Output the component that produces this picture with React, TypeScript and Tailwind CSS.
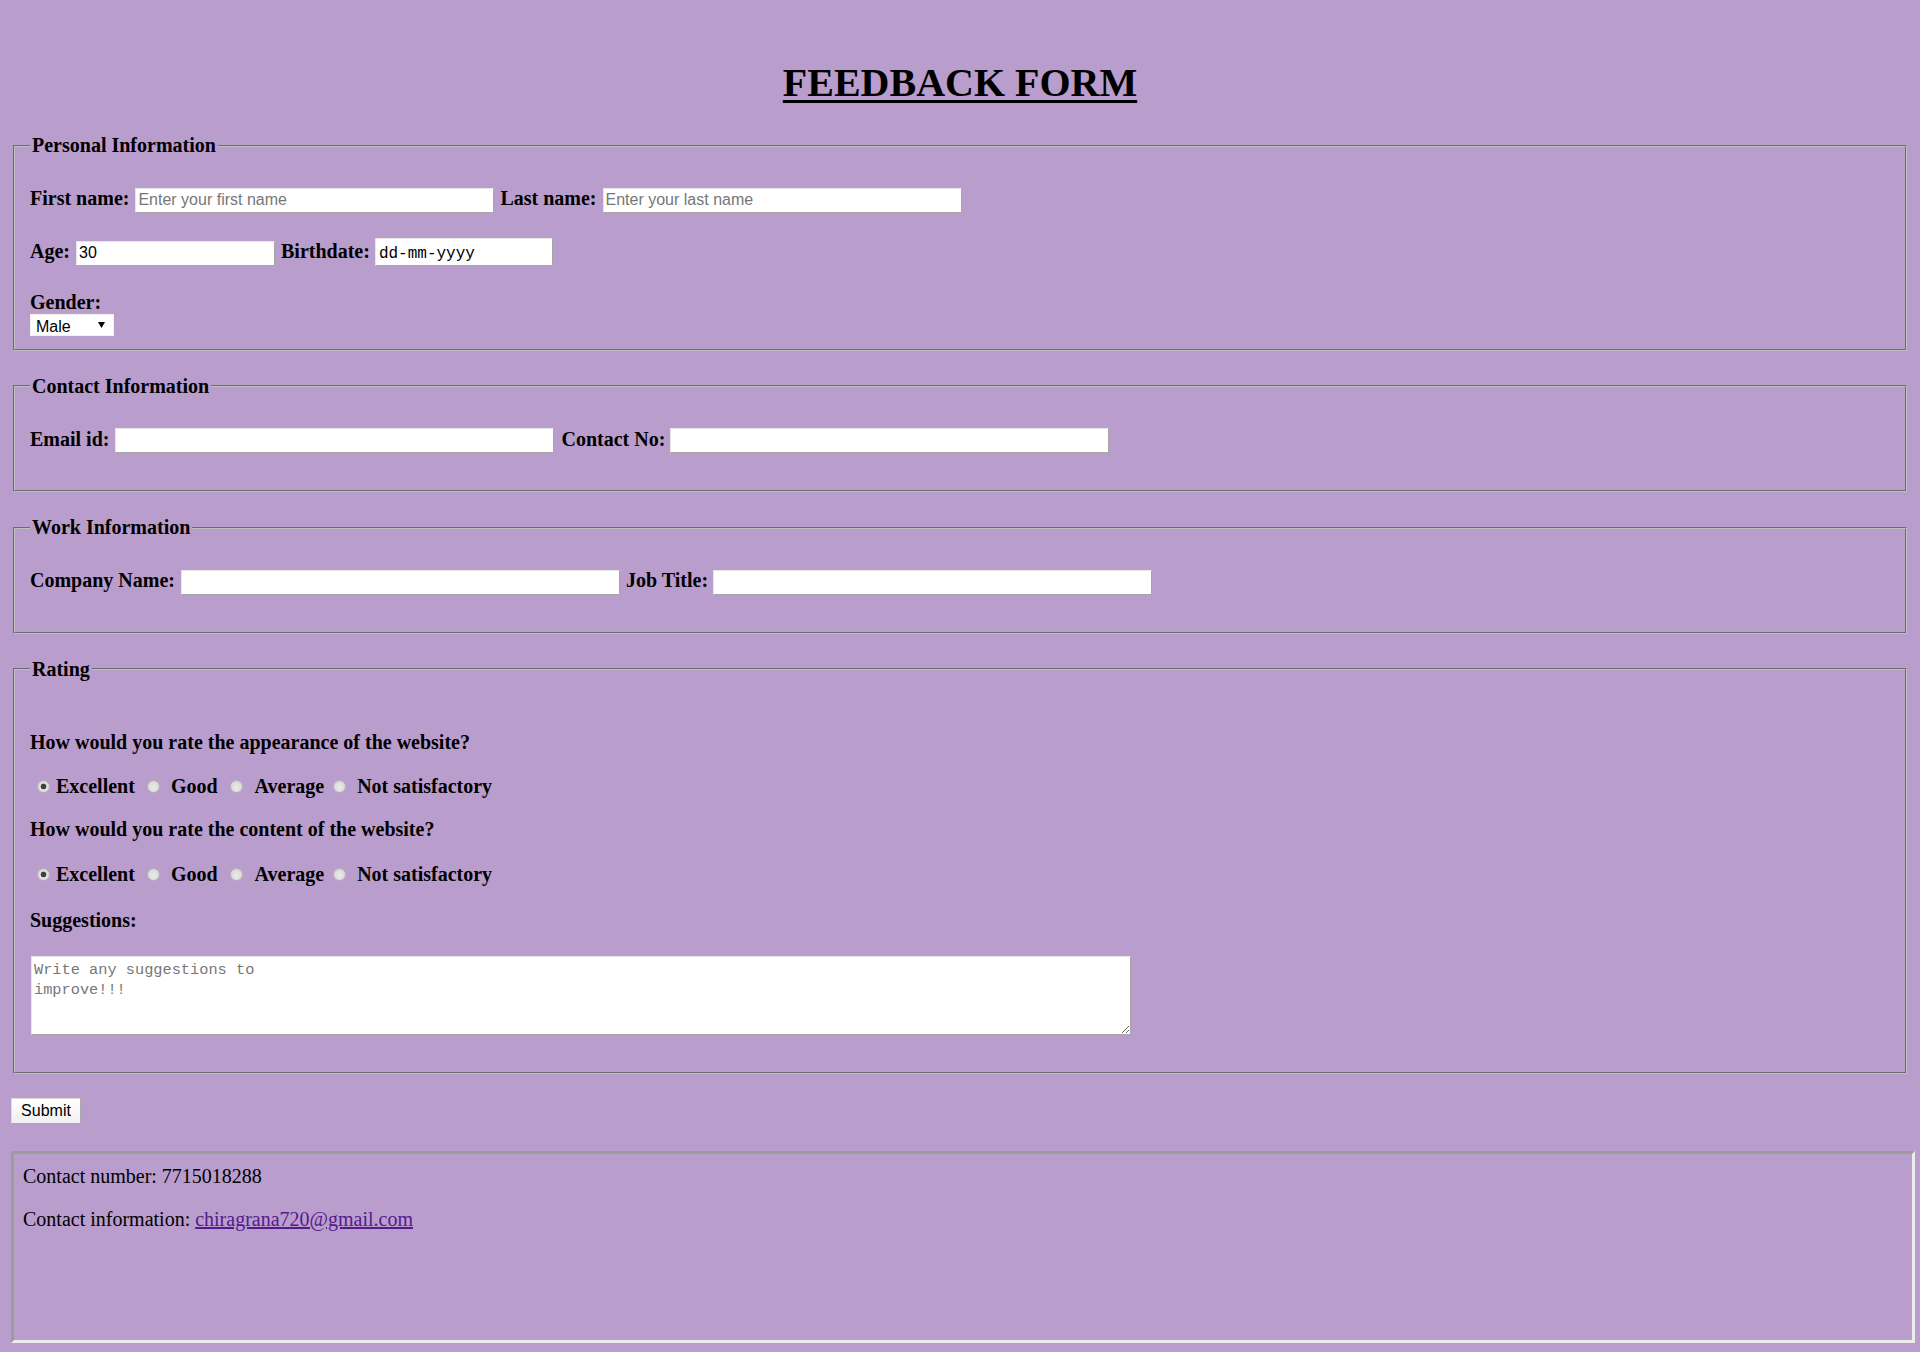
import React from "react";

const field =
  "h-[25px] border border-t-[#e6e6e6] border-l-[#e6e6e6] border-r-[#a6a6a6] border-b-[#a6a6a6] bg-white px-[2px] font-['Liberation_Sans',Arial,sans-serif] text-[16px] font-normal text-black placeholder:text-[#777777] outline-none";

const radio =
  "h-[13px] w-[13px] shrink-0 appearance-none rounded-full border border-[#b5b5b5] bg-[image:radial-gradient(circle_at_50%_60%,#ebebeb_0,#d8d8d8_70%,#c9c9c9_100%)] checked:bg-[image:radial-gradient(circle,#3f3f3f_0,#3f3f3f_2.5px,transparent_3.2px),radial-gradient(circle_at_50%_60%,#ebebeb_0,#d8d8d8_70%,#c9c9c9_100%)]";

type RatingRowProps = {
  name: string;
  className: string;
};

function RatingRow({ name, className }: RatingRowProps) {
  return (
    <div className={`flex h-[23px] items-center ${className}`}>
      <input type="radio" name={name} defaultChecked className={`${radio} ml-[7px]`} />
      <span className="ml-[6px]">Excellent</span>
      <input type="radio" name={name} className={`${radio} ml-[12px]`} />
      <span className="ml-[11px]">Good</span>
      <input type="radio" name={name} className={`${radio} ml-[12px]`} />
      <span className="ml-[12px]">Average</span>
      <input type="radio" name={name} className={`${radio} ml-[9px]`} />
      <span className="ml-[11px]">Not satisfactory</span>
    </div>
  );
}

export default function App() {
  return (
    <div className="min-h-[1352px] bg-[#b99dcd] pt-[60px] pb-[9px] font-['Liberation_Serif','Times_New_Roman',serif] text-[20px] leading-[23px] text-black">
      <h1 className="text-center text-[40px] leading-[46px] font-bold underline decoration-[3px] underline-offset-[4px]">
        FEEDBACK FORM
      </h1>

      <form className="mx-[13px] mt-[28px]" onSubmit={(e) => e.preventDefault()}>
        {/* Personal Information */}
        <fieldset className="[border:2px_groove_#c0c0c0] px-[15px] pb-[13px]">
          <legend className="px-[2px] font-bold leading-[23px]">Personal Information</legend>
          <div className="mt-[30px] flex items-baseline font-bold">
            <span>First name:</span>
            <input type="text" placeholder="Enter your first name" className={`${field} ml-[6px] w-[359px]`} />
            <span className="ml-[6px]">Last name:</span>
            <input type="text" placeholder="Enter your last name" className={`${field} ml-[6px] w-[359px]`} />
          </div>
          <div className="mt-[25px] flex items-baseline font-bold">
            <span>Age:</span>
            <input type="text" defaultValue="30" className={`${field} ml-[6px] w-[199px]`} />
            <span className="ml-[6px]">Birthdate:</span>
            <input
              type="text"
              defaultValue="dd-mm-yyyy"
              className="ml-[5px] h-[28px] w-[178px] border border-t-[#e6e6e6] border-l-[#e6e6e6] border-r-[#a6a6a6] border-b-[#a6a6a6] bg-white px-[3px] pt-[5px] font-['Liberation_Mono',monospace] text-[16px] font-normal text-black outline-none"
            />
          </div>
          <div className="mt-[25px] font-bold">Gender:</div>
          <div className="relative h-[22px] w-[84px]">
            <select className="h-full w-full appearance-none border border-[#f2f2f2] bg-white pl-[5px] font-['Liberation_Sans',Arial,sans-serif] text-[16px] text-black outline-none">
              <option>Male</option>
              <option>Female</option>
              <option>Other</option>
            </select>
            <svg className="pointer-events-none absolute top-[8px] right-[9px]" width="7" height="6" viewBox="0 0 7 6">
              <polygon points="0,0 7,0 3.5,6" fill="#000" />
            </svg>
          </div>
        </fieldset>

        {/* Contact Information */}
        <fieldset className="mt-[24px] [border:2px_groove_#c0c0c0] px-[15px] pb-[37px]">
          <legend className="px-[2px] font-bold leading-[23px]">Contact Information</legend>
          <div className="mt-[30px] flex items-baseline font-bold">
            <span>Email id:</span>
            <input type="email" className={`${field} ml-[6px] w-[439px]`} />
            <span className="ml-[7px]">Contact No:</span>
            <input type="tel" className={`${field} ml-[5px] w-[439px]`} />
          </div>
        </fieldset>

        {/* Work Information */}
        <fieldset className="mt-[24px] [border:2px_groove_#c0c0c0] px-[15px] pb-[37px]">
          <legend className="px-[2px] font-bold leading-[23px]">Work Information</legend>
          <div className="mt-[30px] flex items-baseline font-bold">
            <span>Company Name:</span>
            <input type="text" className={`${field} ml-[6px] w-[439px]`} />
            <span className="ml-[6px]">Job Title:</span>
            <input type="text" className={`${field} ml-[5px] w-[439px]`} />
          </div>
        </fieldset>

        {/* Rating */}
        <fieldset className="mt-[24px] [border:2px_groove_#c0c0c0] px-[15px] pb-[37px] font-bold">
          <legend className="px-[2px] leading-[23px]">Rating</legend>
          <div className="mt-[50px]">How would you rate the appearance of the website?</div>
          <RatingRow name="appearance" className="mt-[21px]" />
          <div className="mt-[20px]">How would you rate the content of the website?</div>
          <RatingRow name="content" className="mt-[22px]" />
          <div className="mt-[23px]">Suggestions:</div>
          <textarea
            placeholder={"Write any suggestions to\nimprove!!!"}
            className="mt-[24px] ml-[1px] block h-[79px] w-[1100px] border border-t-[#e6e6e6] border-l-[#e6e6e6] border-r-[#a6a6a6] border-b-[#a6a6a6] bg-white px-[2px] pt-[3px] font-['Liberation_Mono',monospace] text-[15.3px] leading-[20px] font-normal text-black outline-none placeholder:text-[#777777]"
          />
        </fieldset>
      </form>

      <button
        type="submit"
        className="mt-[24px] ml-[11px] block h-[26px] w-[70px] border border-t-[#dcdcdc] border-l-[#dcdcdc] border-r-[#a9a9a9] border-b-[#a9a9a9] bg-[image:linear-gradient(#ffffff,#f0f0f0)] font-['Liberation_Sans',Arial,sans-serif] text-[16px] leading-[20px] text-black"
      >
        Submit
      </button>

      {/* Footer */}
      <div className="mt-[27px] ml-[11px] h-[192px] w-[1904px] border-[3px] border-t-[#9c9c9c] border-r-[#ececec] border-b-[#ececec] border-l-[#9c9c9c] px-[9px] pt-[11px]">
        <p>Contact number: 7715018288</p>
        <p className="mt-[20px]">
          Contact information:{" "}
          <a href="mailto:chiragrana720@gmail.com" className="text-[#551a8b] underline">
            chiragrana720@gmail.com
          </a>
        </p>
      </div>
    </div>
  );
}
